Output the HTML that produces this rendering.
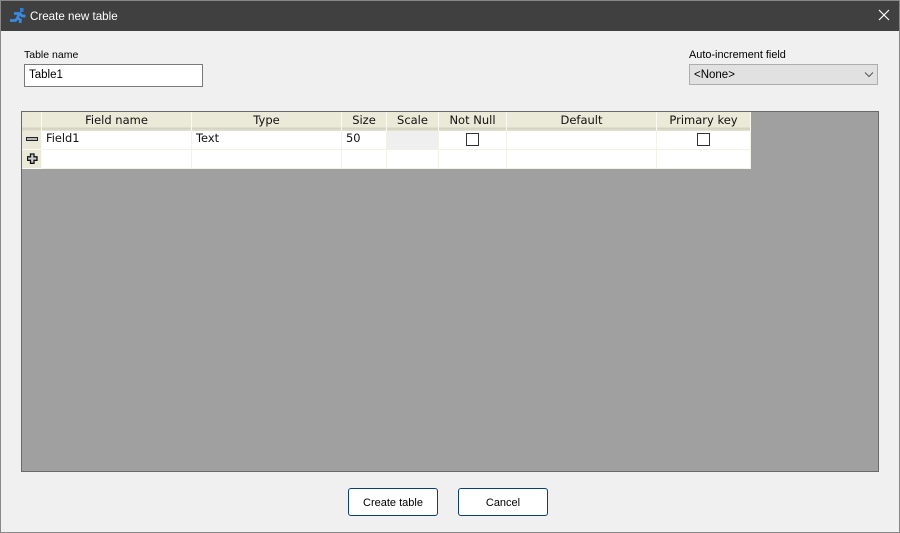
<!DOCTYPE html>
<html><head><meta charset="utf-8">
<style>
html,body{margin:0;padding:0;width:900px;height:533px;overflow:hidden;background:#f0f0f0}
#w{position:relative;width:900px;height:533px;background:#f0f0f0;font-family:"Liberation Sans",sans-serif;font-size:11.5px;color:#000;overflow:hidden}
#w div{position:absolute;box-sizing:border-box;white-space:nowrap}
.h{top:112px;height:19px;background:linear-gradient(#ebe9d8 0,#ebe9d8 15px,#d6d3c2 16px,#d6d3c2 17px,#e6e4d6 19px);border-right:1px solid #fbfaf2;text-align:center;font:11.500px/16px "DejaVu Sans",sans-serif;color:#111}
.c{height:19px;background:#fff;border-right:1px solid #f3f2e6;border-bottom:1px solid #f3f2e6;font:11.400px/15px "DejaVu Sans",sans-serif;color:#111;padding-left:4px}
.cb{width:13px;height:13px;border:1px solid #333;background:#fff;top:133px}
.b{top:488px;width:90px;height:28px;background:#fff;border:1px solid #0a3f78;border-radius:3px;text-align:center;line-height:28px;font-size:11px}
</style></head><body>
<div id="w">
<div style="left:0;top:0;width:900px;height:533px;border:1px solid #888"></div>
<div style="left:1px;top:1px;width:898px;height:30px;background:#404040"></div>
<svg style="position:absolute;left:9px;top:7px" width="17" height="17" viewBox="0 0 17 17"><path d="M11 1h3.500v4H11z" fill="#2f7fd0"/><path d="M5 6.500h6l2 2.500h3.500M10 7L8.500 11 11.500 13 11 16M8.500 11L6.500 13.500H1" stroke="#3a8ae0" stroke-width="2.700" fill="none"/></svg>
<div style="left:30px;top:9px;color:#fff;font-size:11.600px;line-height:16px">Create new table</div>
<svg style="position:absolute;left:878px;top:9px" width="12" height="12" viewBox="0 0 12 12"><path d="M1 1l10 10M11 1L1 11" stroke="#fff" stroke-width="1.200" fill="none"/></svg>

<div style="left:24px;top:48px;line-height:14px;font-size:10.500px">Table name</div>
<div style="left:24px;top:64px;width:179px;height:23px;background:#fff;border:1px solid #7a7a7a;padding-left:4px;line-height:20px;font-size:11.500px">Table1</div>

<div style="left:689px;top:48px;line-height:14px;font-size:10.900px">Auto-increment field</div>
<div style="left:689px;top:64px;width:189px;height:21px;background:#e1e1e1;border:1px solid #adadad;padding-left:4px;line-height:21px;font-size:11.500px">&lt;None&gt;</div>
<svg style="position:absolute;left:864px;top:72px" width="10" height="6" viewBox="0 0 10 6"><path d="M1 .5l4 4 4-4" stroke="#555" fill="none"/></svg>

<div style="left:21px;top:111px;width:858px;height:361px;background:#a0a0a0;border:1px solid #696969"></div>

<div class="h" style="left:22px;width:20px"></div>
<div class="h" style="left:42px;width:150px">Field name</div>
<div class="h" style="left:192px;width:150px">Type</div>
<div class="h" style="left:342px;width:45px">Size</div>
<div class="h" style="left:387px;width:52px">Scale</div>
<div class="h" style="left:439px;width:68px">Not Null</div>
<div class="h" style="left:507px;width:150px">Default</div>
<div class="h" style="left:657px;width:94px">Primary key</div>

<div class="c" style="left:22px;top:131px;width:20px;background:#ebe9d8;border-right:1px solid #fbfaf2;border-bottom:1px solid #fbfaf2"></div>
<div class="c" style="left:22px;top:150px;width:20px;background:#ebe9d8;border-right:1px solid #fbfaf2;border-bottom:1px solid #fbfaf2"></div>
<div style="left:26px;top:137px;width:12px;height:4px;background:#b8b8b8;outline:1px solid #222;outline-offset:-1px"></div>
<svg style="position:absolute;left:27px;top:153px" width="11" height="11" viewBox="0 0 11 11"><path d="M3.500 1h3.500v2.800h3v3.500h-3v3h-3.500v-3h-3V3.800h3z" fill="#ccc" stroke="#111" stroke-width="1.300"/></svg>

<div class="c" style="left:42px;top:131px;width:150px">Field1</div>
<div class="c" style="left:192px;top:131px;width:150px">Text</div>
<div class="c" style="left:342px;top:131px;width:45px">50</div>
<div class="c" style="left:387px;top:131px;width:52px;background:#efefef"></div>
<div class="c" style="left:439px;top:131px;width:68px"></div>
<div class="c" style="left:507px;top:131px;width:150px"></div>
<div class="c" style="left:657px;top:131px;width:94px"></div>
<div class="c" style="left:42px;top:150px;width:150px"></div>
<div class="c" style="left:192px;top:150px;width:150px"></div>
<div class="c" style="left:342px;top:150px;width:45px"></div>
<div class="c" style="left:387px;top:150px;width:52px"></div>
<div class="c" style="left:439px;top:150px;width:68px"></div>
<div class="c" style="left:507px;top:150px;width:150px"></div>
<div class="c" style="left:657px;top:150px;width:94px"></div>
<div class="cb" style="left:466px"></div>
<div class="cb" style="left:697px"></div>

<div class="b" style="left:348px">Create table</div>
<div class="b" style="left:458px">Cancel</div>
</div>
</body></html>
